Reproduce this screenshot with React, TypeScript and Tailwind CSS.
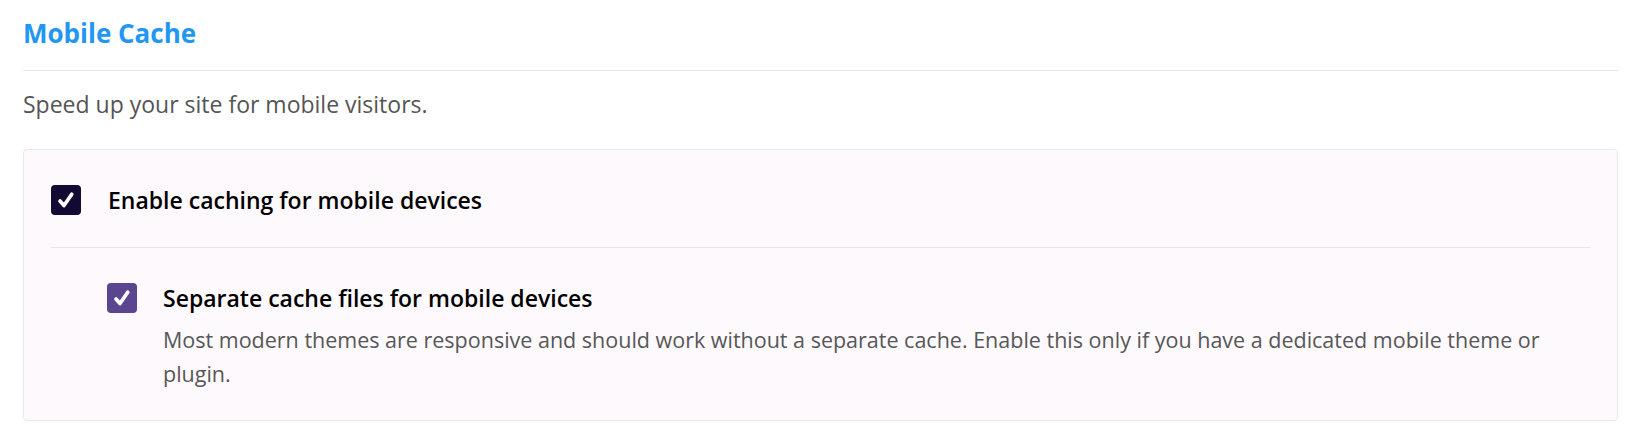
function Box({ tone }: { tone: 'dark' | 'purple' }) {
  return (
    <span
      className={
        'flex h-[30px] w-[30px] shrink-0 items-center justify-center rounded-[4px] ' +
        (tone === 'dark' ? 'bg-[#120a32]' : 'bg-[#5b4490]')
      }
    >
      <svg viewBox="0 0 20 20" className="h-[24px] w-[24px]" fill="none">
        <path
          d="M5 10.9 8.3 14.6 14.8 5.2"
          stroke="white"
          strokeWidth="3.1"
          strokeLinecap="round"
          strokeLinejoin="round"
        />
      </svg>
    </span>
  );
}

export default function App() {
  return (
    <div className="min-h-screen bg-white px-[23px] pt-[16px] font-['Open_Sans','Noto_Sans',sans-serif]">
      <h2 className="text-[26px] font-bold leading-[34px] text-[#2196f3]">Mobile Cache</h2>
      <div className="mt-[20px] h-px w-[1595px] bg-[#e4e4ea]" />
      <p className="mt-[17px] text-[23px] leading-[32px] text-[#555]">
        Speed up your site for mobile visitors.
      </p>

      <div className="mt-[29px] w-[1595px] rounded-[4px] border border-[#ebe7ee] bg-[#fdf9fd] px-[27px] pb-[29px] pt-[34px]">
        <label className="flex items-center gap-[27px]">
          <Box tone="dark" />
          <span className="text-[23px] font-semibold leading-[32px] text-black">
            Enable caching for mobile devices
          </span>
        </label>

        <div className="mt-[31px] h-px bg-[#e7e4ea]" />

        <div className="mt-[34px] flex gap-[26px] pl-[56px]">
          <div className="pt-[1px]">
            <Box tone="purple" />
          </div>
          <div>
            <div className="text-[23px] font-semibold leading-[32px] text-black">
              Separate cache files for mobile devices
            </div>
            <p className="mt-[9px] text-[21.5px] leading-[34px] text-[#575757]">
              Most modern themes are responsive and should work without a separate cache. Enable
              this only if you have a dedicated mobile theme or plugin.
            </p>
          </div>
        </div>
      </div>
    </div>
  );
}
